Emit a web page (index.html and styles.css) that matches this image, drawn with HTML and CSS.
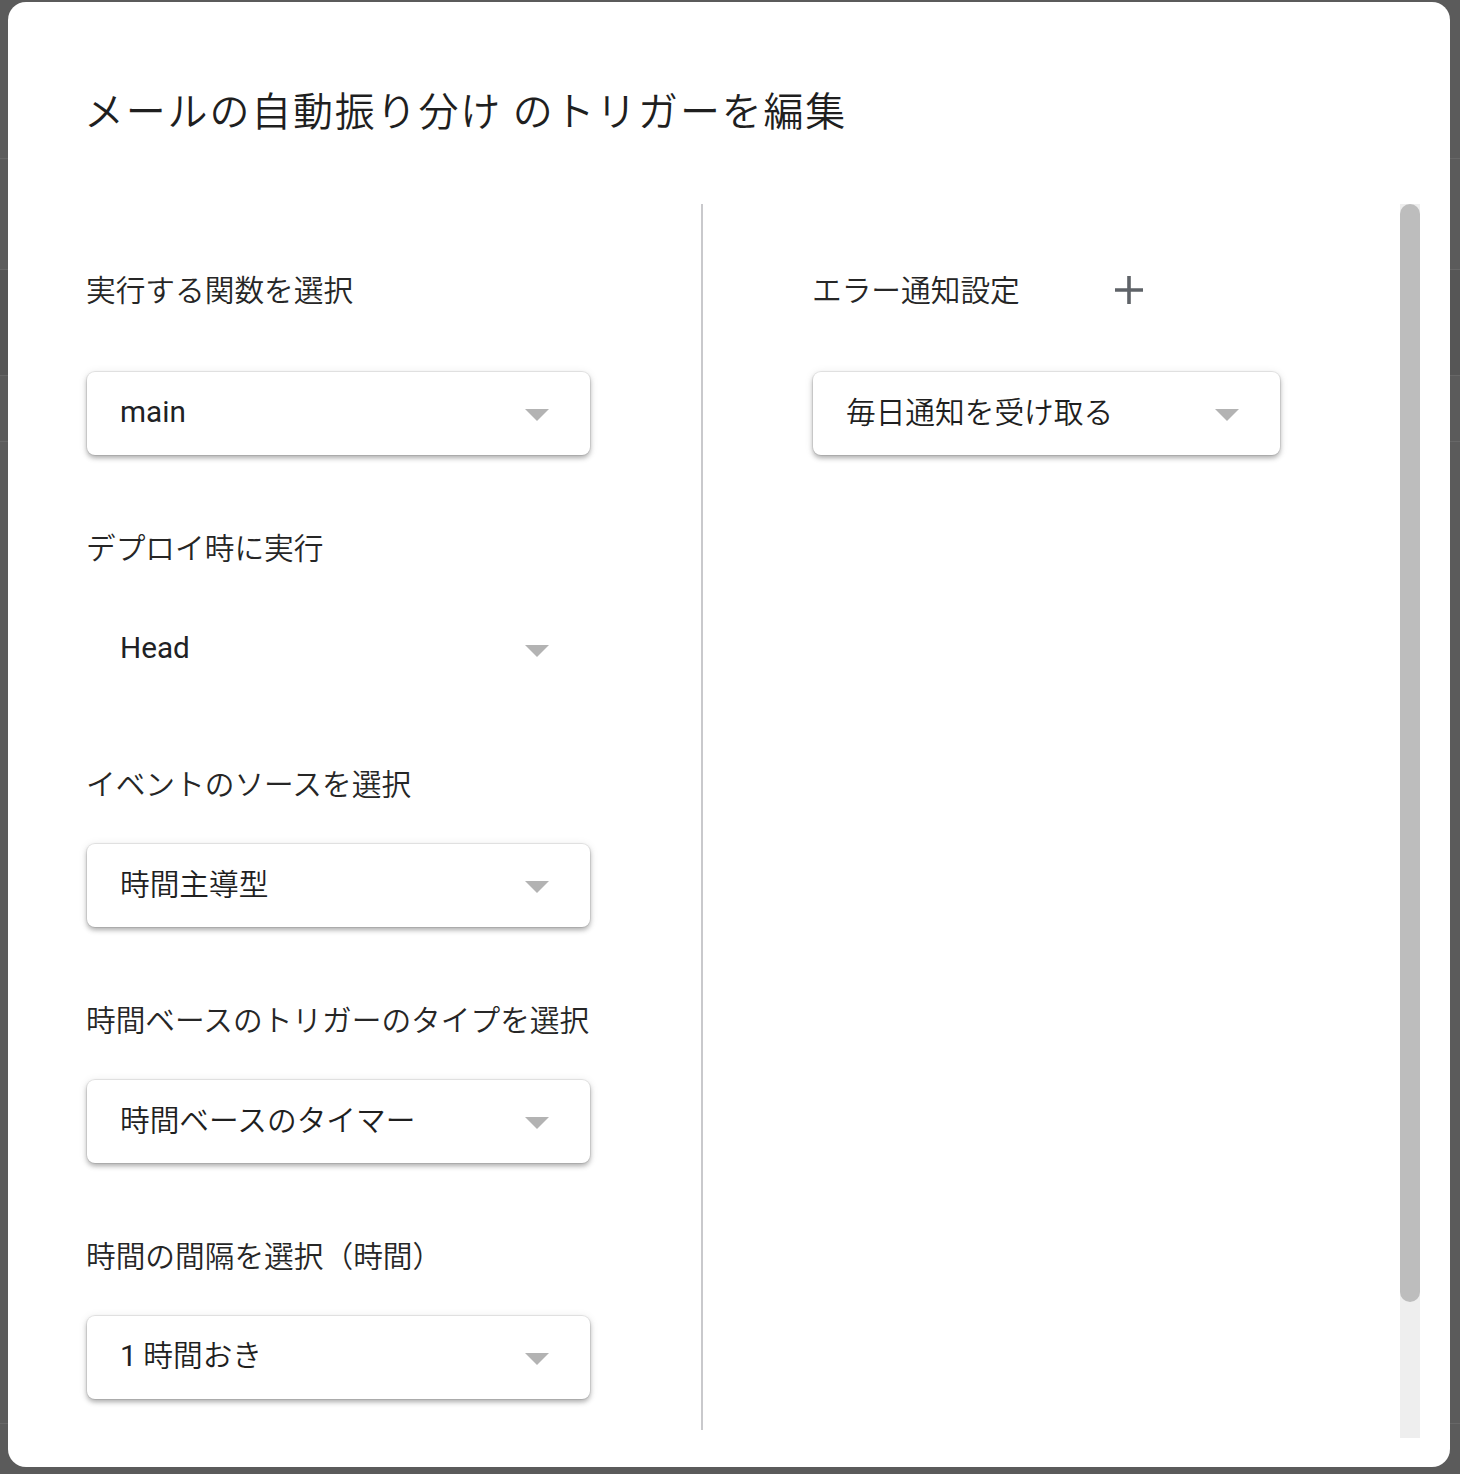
FILE: index.html
```html
<!DOCTYPE html>
<html lang="ja">
<head>
<meta charset="utf-8">
<title>トリガーを編集</title>
<link rel="stylesheet" href="styles.css">
</head>
<body>
<div class="page">
  <div class="page-row page-row-head"></div>
  <div class="page-row page-row-a"></div>
  <div class="page-row page-row-b"></div>
  <div class="page-row page-row-c"></div>
  <div class="page-row page-row-d"></div>
</div>

<div class="dialog">
  <h1 class="title">メールの自動振り分け のトリガーを編集</h1>
  <div class="body">
    <div class="col col-left">
      <div class="field field-first">
        <div class="label">実行する関数を選択</div>
        <div class="select"><span class="value value-latin">main</span><i class="caret"></i></div>
      </div>
      <div class="field">
        <div class="label">デプロイ時に実行</div>
        <div class="select select-plain"><span class="value value-latin">Head</span><i class="caret"></i></div>
      </div>
      <div class="field">
        <div class="label">イベントのソースを選択</div>
        <div class="select"><span class="value">時間主導型</span><i class="caret"></i></div>
      </div>
      <div class="field">
        <div class="label">時間ベースのトリガーのタイプを選択</div>
        <div class="select"><span class="value">時間ベースのタイマー</span><i class="caret"></i></div>
      </div>
      <div class="field">
        <div class="label">時間の間隔を選択（時間）</div>
        <div class="select"><span class="value"><span class="num">1</span> 時間おき</span><i class="caret"></i></div>
      </div>
    </div>
    <div class="divider"></div>
    <div class="col col-right">
      <div class="field field-first">
        <div class="label-row">
          <div class="label">エラー通知設定</div>
          <svg class="plus" viewBox="0 0 28 28" width="28" height="28" aria-hidden="true">
            <path d="M14 0 V28 M0 14 H28" stroke="#5f6368" stroke-width="3.6" fill="none"/>
          </svg>
        </div>
        <div class="select select-narrow"><span class="value">毎日通知を受け取る</span><i class="caret"></i></div>
      </div>
    </div>
    <div class="scrollbar"><div class="thumb"></div></div>
  </div>
</div>
</body>
</html>
```

FILE: styles.css
```css
html, body {
  margin: 0;
  padding: 0;
}

body {
  width: 1460px;
  height: 1474px;
  background: #5b5b5b;
  font-family: Roboto, "Noto Sans CJK JP", sans-serif;
  overflow: hidden;
  position: relative;
}

/* underlying page, dimmed behind the modal */
.page {
  display: flex;
  flex-direction: column;
}

.page-row {
  border-bottom: 1px solid #676767;
}

.page-row-head { height: 158px; }
.page-row-a { height: 110px; }
.page-row-b { height: 105px; background: #565656; }
.page-row-c { height: 65px; }
.page-row-d { height: 981px; }

/* modal dialog */
.dialog {
  position: absolute;
  left: 8px;
  top: 2px;
  width: 1442px;
  height: 1465px;
  box-sizing: border-box;
  background: #ffffff;
  border-radius: 18px;
  padding: 83px 30px 29px 0;
  display: flex;
  flex-direction: column;
}

.title {
  margin: 0;
  padding-left: 76px;
  font-family: "Noto Sans CJK JP", sans-serif;
  font-size: 40px;
  line-height: 48px;
  font-weight: 350;
  letter-spacing: 1.8px;
  color: #1f1f1f;
  white-space: nowrap;
}

.body {
  margin-top: 71px;
  height: 1234px;
  display: flex;
  align-items: flex-start;
}

.col-left {
  width: 693px;
  box-sizing: border-box;
  padding-left: 78px;
  padding-top: 67px;
}

.divider {
  width: 2px;
  height: 1226px;
  background: #c9c9cc;
  flex: none;
}

.col-right {
  flex: 1;
  box-sizing: border-box;
  padding-left: 109px;
  padding-top: 67px;
}

.scrollbar {
  width: 20px;
  height: 1234px;
  background: #eeeeee;
  flex: none;
}

.thumb {
  height: 1098px;
  background: #bdbdbd;
  border-radius: 10px;
}

/* fields */
.field {
  margin-bottom: 74px;
}

.label {
  font-family: "Noto Sans CJK JP", sans-serif;
  font-size: 29.7px;
  line-height: 40px;
  font-weight: 350;
  color: #262626;
  white-space: nowrap;
  margin-top: -2px;
  margin-bottom: 41px;
}

.field-first .label {
  margin-bottom: 63px;
}

.label-row {
  display: flex;
  align-items: center;
  margin-top: -2px;
  margin-bottom: 63px;
}

.field-first .label-row .label {
  margin: 0;
}

.plus {
  margin-left: 95px;
  margin-top: 2px;
  flex: none;
}

.select {
  width: 503px;
  height: 83px;
  box-sizing: border-box;
  margin-left: 1px;
  padding: 0 41px 0 33px;
  display: flex;
  align-items: center;
  justify-content: space-between;
  background: #ffffff;
  border-radius: 8px;
  box-shadow: 0 0 0 1px rgba(0, 0, 0, 0.07), 0 3px 5px rgba(0, 0, 0, 0.28), 0 1px 10px rgba(0, 0, 0, 0.1);
}

.select-plain {
  background: transparent;
  box-shadow: none;
}

.select-narrow {
  width: 467px;
  margin-left: 1px;
}

.value {
  font-family: "Noto Sans CJK JP", sans-serif;
  font-size: 29.7px;
  line-height: 40px;
  font-weight: 350;
  color: #1f1f1f;
  white-space: nowrap;
  margin-top: -5px;
}

.value-latin {
  font-family: Roboto, sans-serif;
  font-weight: 400;
  color: #202124;
  margin-top: -3px;
}

.num {
  font-family: Roboto, sans-serif;
  font-weight: 400;
}

.caret {
  width: 0;
  height: 0;
  border-left: 12px solid transparent;
  border-right: 12px solid transparent;
  border-top: 12px solid #b3b3b3;
  margin-top: 2px;
}
```
